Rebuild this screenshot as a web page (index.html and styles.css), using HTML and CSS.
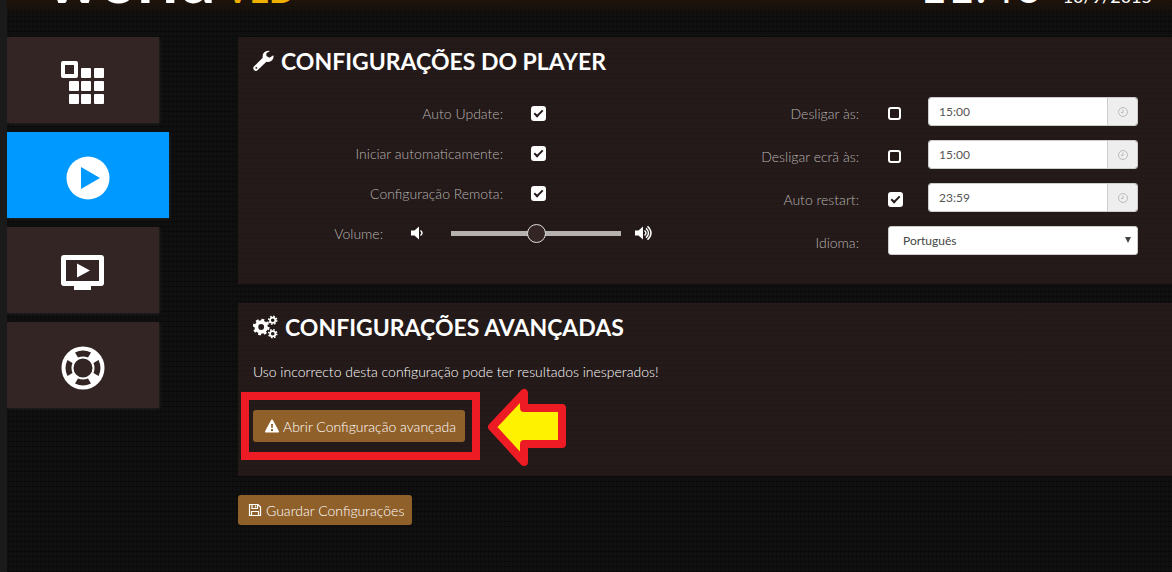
FILE: index.html
```html
<!DOCTYPE html>
<html lang="pt">
<head>
    <meta charset="UTF-8">
    <title>Configurações do Player</title>
    <link rel="stylesheet" href="styles.css">
</head>
<body>
    <header class="top-bar">
        <div class="top-line">
            <div class="logo">world<span class="logo-accent">VED</span></div>
            <div class="clock"><span class="time">11:40</span><span class="date">10/9/2015</span></div>
        </div>
    </header>

    <div class="page">
        <nav class="side-menu">
            <a href="#" class="menu-item" aria-label="Apps">
                <svg viewBox="0 0 44 44" fill="#fff">
                    <path fill-rule="evenodd" d="M2 0h13q2 0 2 2v13q0 2-2 2h-13q-2 0-2-2v-13q0-2 2-2zM4 4v9h9v-9z"/>
                    <rect x="20" y="7" width="10" height="10" rx="1"/>
                    <rect x="33" y="7" width="10" height="10" rx="1"/>
                    <rect x="8" y="20" width="10" height="10" rx="1"/>
                    <rect x="20" y="20" width="10" height="10" rx="1"/>
                    <rect x="33" y="20" width="10" height="10" rx="1"/>
                    <rect x="8" y="33" width="10" height="10" rx="1"/>
                    <rect x="20" y="33" width="10" height="10" rx="1"/>
                    <rect x="33" y="33" width="10" height="10" rx="1"/>
                </svg>
            </a>
            <a href="#" class="menu-item active" aria-label="Player">
                <svg viewBox="0 0 44 44"><circle cx="22" cy="22" r="21.5" fill="#fff"/><path d="M15 11v22l19-11z" fill="#0099ff"/></svg>
            </a>
            <a href="#" class="menu-item" aria-label="Ecrã">
                <svg viewBox="0 0 44 44" fill="#fff">
                    <path fill-rule="evenodd" d="M3 4h37q3 0 3 3v25q0 3-3 3h-10v4h-17v-4h-10q-3 0-3-3v-25q0-3 3-3zM5 9v21h33v-21z"/>
                    <path d="M16 12.500v14l13-7z"/>
                </svg>
            </a>
            <a href="#" class="menu-item" aria-label="Ajuda">
                <svg viewBox="0 0 44 44" fill="none">
                    <circle cx="22" cy="22" r="15.500" stroke="#fff" stroke-width="12"/>
                    <path fill="#322524" d="M14 6.500Q22 2.500 30 6.500L27 11.500Q22 9.500 17 11.500zM14 37.500Q22 41.500 30 37.500L27 32.500Q22 34.500 17 32.500zM6.500 14Q2.500 22 6.500 30L11.500 27Q9.500 22 11.500 17zM37.500 14Q41.500 22 37.500 30L32.500 27Q34.500 22 32.500 17z"/>
                </svg>
            </a>
        </nav>

        <form class="content">
            <section class="panel">
                <h2>
                    <svg class="icon-wrench" viewBox="0 0 22 22"><path fill="#fff" fill-rule="evenodd" d="M21.300 5l-4 2.500-3.300-1.800V3l3.800-2.500Q14.500-.6 11.800 1.800 9.500 4 10.200 7.500L1 16.800Q-.6 18.500 1 20.300q1.800 2 3.800.5L14 11.800q3.500 1 6-1.500 2.200-2.400 1.300-5.300zM3.500 17.200a1 1 0 1 1 0 2a1 1 0 1 1 0-2z"/></svg>
                    CONFIGURAÇÕES DO PLAYER
                </h2>
                <div class="columns">
                    <div class="col-left">
                        <div class="row">
                            <label for="auto-update">Auto Update:</label>
                            <input type="checkbox" id="auto-update" checked>
                        </div>
                        <div class="row">
                            <label for="auto-start">Iniciar automaticamente:</label>
                            <input type="checkbox" id="auto-start" checked>
                        </div>
                        <div class="row">
                            <label for="remote">Configuração Remota:</label>
                            <input type="checkbox" id="remote" checked>
                        </div>
                        <div class="row volume-row">
                            <label for="volume">Volume:</label>
                            <svg class="icon-low" viewBox="0 0 18 16"><path fill="#fff" d="M0 5.500h3.500L8 1.500v13L3.500 10.500H0z"/><path fill="none" stroke="#fff" stroke-width="1.500" d="M9.500 5.500q3 2.500 0 5"/></svg>
                            <input type="range" id="volume" min="0" max="100" value="50">
                            <svg class="icon-high" viewBox="0 0 18 16"><path fill="#fff" d="M0 5.500h3.500L8 1.500v13L3.500 10.500H0z"/><path fill="none" stroke="#fff" stroke-width="1.500" d="M9.500 5.500q3 2.500 0 5M11 3.300q5 4.700 0 9.400M12.500 1.200q7 6.800 0 13.600"/></svg>
                        </div>
                    </div>
                    <div class="col-right">
                        <div class="row">
                            <label for="turn-off">Desligar às:</label>
                            <input type="checkbox" id="turn-off">
                            <div class="time-group">
                                <input type="text" value="15:00" aria-label="Hora de desligar">
                                <button type="button" aria-label="Escolher hora"><svg viewBox="0 0 12 12"><circle cx="6" cy="6" r="4.500"/><path d="M6 3.500V6.500H4"/></svg></button>
                            </div>
                        </div>
                        <div class="row">
                            <label for="screen-off">Desligar ecrã às:</label>
                            <input type="checkbox" id="screen-off">
                            <div class="time-group">
                                <input type="text" value="15:00" aria-label="Hora de desligar ecrã">
                                <button type="button" aria-label="Escolher hora"><svg viewBox="0 0 12 12"><circle cx="6" cy="6" r="4.500"/><path d="M6 3.500V6.500H4"/></svg></button>
                            </div>
                        </div>
                        <div class="row">
                            <label for="restart">Auto restart:</label>
                            <input type="checkbox" id="restart" checked>
                            <div class="time-group">
                                <input type="text" value="23:59" aria-label="Hora de restart">
                                <button type="button" aria-label="Escolher hora"><svg viewBox="0 0 12 12"><circle cx="6" cy="6" r="4.500"/><path d="M6 3.500V6.500H4"/></svg></button>
                            </div>
                        </div>
                        <div class="row">
                            <label for="language">Idioma:</label>
                            <div class="select-wrap">
                                <select id="language">
                                    <option>Português</option>
                                </select>
                            </div>
                        </div>
                    </div>
                </div>
            </section>

            <section class="panel advanced">
                <h2>
                    <svg class="icon-cogs" viewBox="0 0 26 24" fill="none" stroke="#fff">
                        <circle cx="8.500" cy="12" r="5" stroke-width="4"/>
                        <circle cx="8.500" cy="12" r="7.500" stroke-width="2.400" stroke-dasharray="3 2.890"/>
                        <circle cx="20.500" cy="5" r="2.800" stroke-width="1.800"/>
                        <circle cx="20.500" cy="5" r="4.200" stroke-width="1.500" stroke-dasharray="1.700 1.600"/>
                        <circle cx="20.500" cy="19" r="2.800" stroke-width="1.800"/>
                        <circle cx="20.500" cy="19" r="4.200" stroke-width="1.500" stroke-dasharray="1.700 1.600"/>
                    </svg>
                    CONFIGURAÇÕES AVANÇADAS
                </h2>
                <p>Uso incorrecto desta configuração pode ter resultados inesperados!</p>
                <div class="open-row">
                    <div class="highlight">
                        <button type="button" class="btn btn-open">
                            <svg viewBox="0 0 14 14"><path fill="#fff" fill-rule="evenodd" d="M7 .5q.6 0 1 .8l5.800 10.700q.5 1.500-1 1.500H1.200q-1.500 0-1-1.500L6 1.300q.4-.8 1-.8zM6 5l.3 4h1.400L8 5zM6 10v2h2v-2z"/></svg>
                            Abrir Configuração avançada
                        </button>
                    </div>
                    <svg class="arrow" viewBox="0 0 80 80"><path d="M5 41L37 7V22H75V58H37V76z" fill="#fff200" stroke="#ed1c24" stroke-width="8" stroke-linejoin="round"/></svg>
                </div>
            </section>

            <button type="submit" class="btn btn-save">
                <svg viewBox="0 0 14 14" fill="none" stroke="#fff" stroke-width="1.200"><path d="M1.500 1.500h8.500l2.500 2.500v8.500h-11zM4 1.500v4h5.500v-4M3.500 12.500v-4h7v4M7.500 2.500v2"/></svg>
                Guardar Configurações
            </button>
        </form>
    </div>
</body>
</html>
```
FILE: styles.css
```css
* {
    box-sizing: border-box;
}

body {
    margin: 0;
    min-height: 100vh;
    border-left: 7px solid #1a1a1a;
    background-color: #101010;
    background-image:
        repeating-linear-gradient(90deg, rgba(0, 0, 0, 0.2) 0 1px, transparent 1px 4px),
        repeating-linear-gradient(0deg, rgba(0, 0, 0, 0.3) 0 1px, transparent 1px 5px);
    color: #fff;
    font-family: "Lato", sans-serif;
    font-size: 14px;
    overflow: hidden;
}

/* only the bottom edge of the bar stays in view */
.top-bar {
    display: flex;
    align-items: flex-end;
    height: 37px;
    padding: 0 20px 26px 40px;
    background: linear-gradient(rgba(32, 20, 10, 0.9), rgba(24, 18, 10, 0) 16px);
    white-space: nowrap;
}

.top-line {
    display: flex;
    flex: 1;
    justify-content: space-between;
    align-items: baseline;
}

.logo {
    font-size: 66px;
    line-height: 66px;
    font-weight: bold;
}

.logo-accent {
    margin-left: 10px;
    color: #f0b000;
    font-size: 34px;
    line-height: 34px;
}

.clock {
    display: flex;
    align-items: baseline;
    gap: 20px;
}

.time {
    font-size: 48px;
    line-height: 48px;
}

.date {
    font-size: 18px;
}

.page {
    display: flex;
    align-items: flex-start;
}

.side-menu {
    display: flex;
    flex-direction: column;
    flex: none;
    gap: 9px;
    width: 231px;
}

.menu-item {
    display: flex;
    align-items: center;
    justify-content: center;
    width: 152px;
    height: 86px;
    padding-top: 6px;
    background-color: #322524;
    box-shadow: 1px 1px 3px rgba(60, 60, 60, 0.4);
}

.menu-item svg {
    width: 44px;
    height: 44px;
}

.menu-item.active {
    width: 162px;
    background-color: #0099ff;
}

.content {
    flex: 1;
    min-width: 0;
}

.panel {
    margin-bottom: 19px;
    padding: 8px 15px 22px;
    background-color: #241a19;
    background-image: repeating-linear-gradient(0deg, rgba(0, 0, 0, 0.1) 0 1px, transparent 1px 5px);
}

.panel h2 {
    display: flex;
    align-items: center;
    gap: 7px;
    margin: 0;
    font-size: 23px;
    line-height: 32px;
    font-weight: bold;
}

.icon-wrench {
    width: 21px;
    height: 22px;
}

.icon-cogs {
    width: 25px;
    height: 24px;
}

.columns {
    display: flex;
    justify-content: space-between;
    padding: 13px 19px 0 0;
}

.row {
    display: flex;
    align-items: center;
}

.row label {
    text-align: right;
    color: #b8b3b1;
    font-weight: 300;
}

.col-left {
    padding-top: 3px;
}

.col-left .row {
    height: 40px;
}

.col-left label {
    width: 250px;
    margin-right: 28px;
}

.col-left .volume-row label {
    width: 130px;
}

.col-right .row {
    height: 43px;
}

.col-right label {
    width: 130px;
    margin-right: 29px;
    padding-top: 4px;
}

input[type="checkbox"] {
    appearance: none;
    width: 15px;
    height: 15px;
    margin: 0;
    border: 2px solid #fff;
    border-radius: 3px;
}

.col-right input[type="checkbox"] {
    width: 13px;
    height: 13px;
    margin: 4px 27px 0 0;
}

.col-right input[type="checkbox"]:checked {
    width: 15px;
    height: 15px;
    margin-right: 25px;
}

input[type="checkbox"]:checked {
    background-color: #fff;
}

input[type="checkbox"]:checked::before {
    content: "";
    display: block;
    width: 7px;
    height: 3px;
    margin: 2px 1px;
    border-left: 2px solid #231a19;
    border-bottom: 2px solid #231a19;
    transform: rotate(-45deg);
}

.icon-low,
.icon-high {
    width: 18px;
    height: 16px;
}

input[type="range"] {
    appearance: none;
    width: 170px;
    height: 20px;
    margin: 0 14px 0 22px;
    background: transparent;
}

input[type="range"]::-webkit-slider-runnable-track {
    height: 5px;
    background-color: #b5b1b0;
}

input[type="range"]::-webkit-slider-thumb {
    appearance: none;
    width: 19px;
    height: 19px;
    margin-top: -7px;
    border: 1px solid #ddd;
    border-radius: 50%;
    background-color: #322524;
}

.time-group {
    display: flex;
    width: 210px;
    height: 29px;
    border: 1px solid #ccc;
    border-radius: 3px;
    overflow: hidden;
}

.time-group input {
    flex: 1;
    min-width: 0;
    padding: 0 10px;
    border: none;
    background-color: #fff;
    color: #555;
    font-family: inherit;
    font-size: 12px;
}

.time-group button {
    display: flex;
    align-items: center;
    justify-content: center;
    width: 30px;
    padding: 0;
    border: none;
    border-left: 1px solid #ccc;
    background-color: #eee;
}

.time-group button svg {
    width: 12px;
    height: 12px;
    fill: none;
    stroke: #bbb;
}

.select-wrap {
    position: relative;
    width: 250px;
}

.select-wrap::after {
    content: "";
    position: absolute;
    top: 11px;
    right: 7px;
    border: 3px solid transparent;
    border-top: 6px solid #444;
    border-bottom: none;
}

select {
    appearance: none;
    display: block;
    width: 100%;
    height: 29px;
    padding: 0 14px;
    border: 1px solid #ccc;
    border-radius: 3px;
    background-color: #fff;
    color: #444;
    font-family: inherit;
    font-size: 12px;
}

.advanced {
    padding-bottom: 10px;
}

.advanced p {
    margin: 20px 0 5px;
    font-weight: 300;
    line-height: 18px;
}

.open-row {
    display: flex;
    align-items: center;
    gap: 7px;
    margin-left: -12px;
}

.highlight {
    padding: 10px 7px 10px 4px;
    border: 8px solid #ed1c24;
}

.btn {
    display: flex;
    align-items: center;
    gap: 4px;
    border: none;
    border-radius: 3px;
    background-color: #90602a;
    color: #fff;
    font-family: inherit;
    font-size: 14px;
    font-weight: 300;
    white-space: nowrap;
    cursor: pointer;
}

.btn svg {
    width: 14px;
    height: 14px;
}

.btn-open {
    height: 32px;
    padding: 0 9px 0 12px;
}

.btn-save {
    height: 30px;
    padding: 0 8px 0 10px;
}

.arrow {
    width: 80px;
    height: 80px;
}
```
